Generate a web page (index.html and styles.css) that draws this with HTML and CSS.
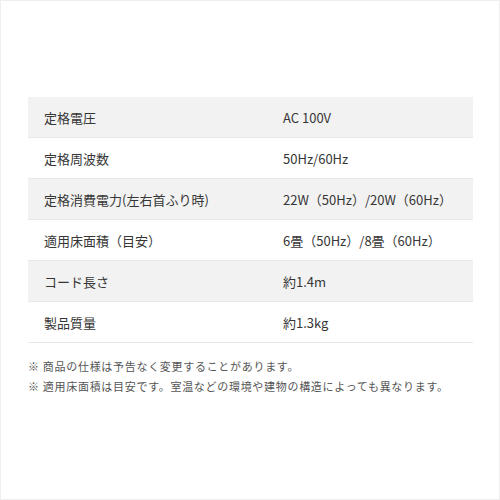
FILE: index.html
```html
<!DOCTYPE html>
<html lang="ja">
<head>
<meta charset="utf-8">
<link rel="stylesheet" href="styles.css">
</head>
<body>
<div class="frame">
  <div class="spec">
    <div class="row alt"><div class="label">定格電圧</div><div class="value">AC 100V</div></div>
    <div class="row"><div class="label">定格周波数</div><div class="value">50Hz/60Hz</div></div>
    <div class="row alt"><div class="label">定格消費電力(左右首ふり時)</div><div class="value">22W（50Hz）/20W（60Hz）</div></div>
    <div class="row"><div class="label">適用床面積（目安）</div><div class="value">6畳（50Hz）/8畳（60Hz）</div></div>
    <div class="row alt"><div class="label">コード長さ</div><div class="value">約1.4m</div></div>
    <div class="row"><div class="label">製品質量</div><div class="value">約1.3kg</div></div>
  </div>
  <div class="notes">
    <p>※ 商品の仕様は予告なく変更することがあります。</p>
    <p>※ 適用床面積は目安です。室温などの環境や建物の構造によっても異なります。</p>
  </div>
</div>
</body>
</html>
```
FILE: styles.css
```css
html, body {
  margin: 0;
  padding: 0;
  background: #fff;
}
.frame {
  box-sizing: border-box;
  width: 500px;
  height: 500px;
  border: 1px solid #efefef;
  padding: 96px 27px 0 27px;
  font-family: "Noto Sans CJK JP", "Noto Sans", sans-serif;
  color: #363636;
}
.spec {
  width: 445px;
}
.row {
  display: grid;
  grid-template-columns: 255px 1fr;
  height: 40px;
  align-items: center;
  border-bottom: 1px solid #e8e8e8;
  font-size: 13px;
}
.row.alt {
  background: #f2f2f2;
}
.label {
  padding-left: 16px;
}
.notes {
  margin-top: 13px;
  font-size: 11px;
  color: #555;
}
.notes p {
  margin: 0;
  line-height: 20px;
  letter-spacing: 0.7px;
}
```
